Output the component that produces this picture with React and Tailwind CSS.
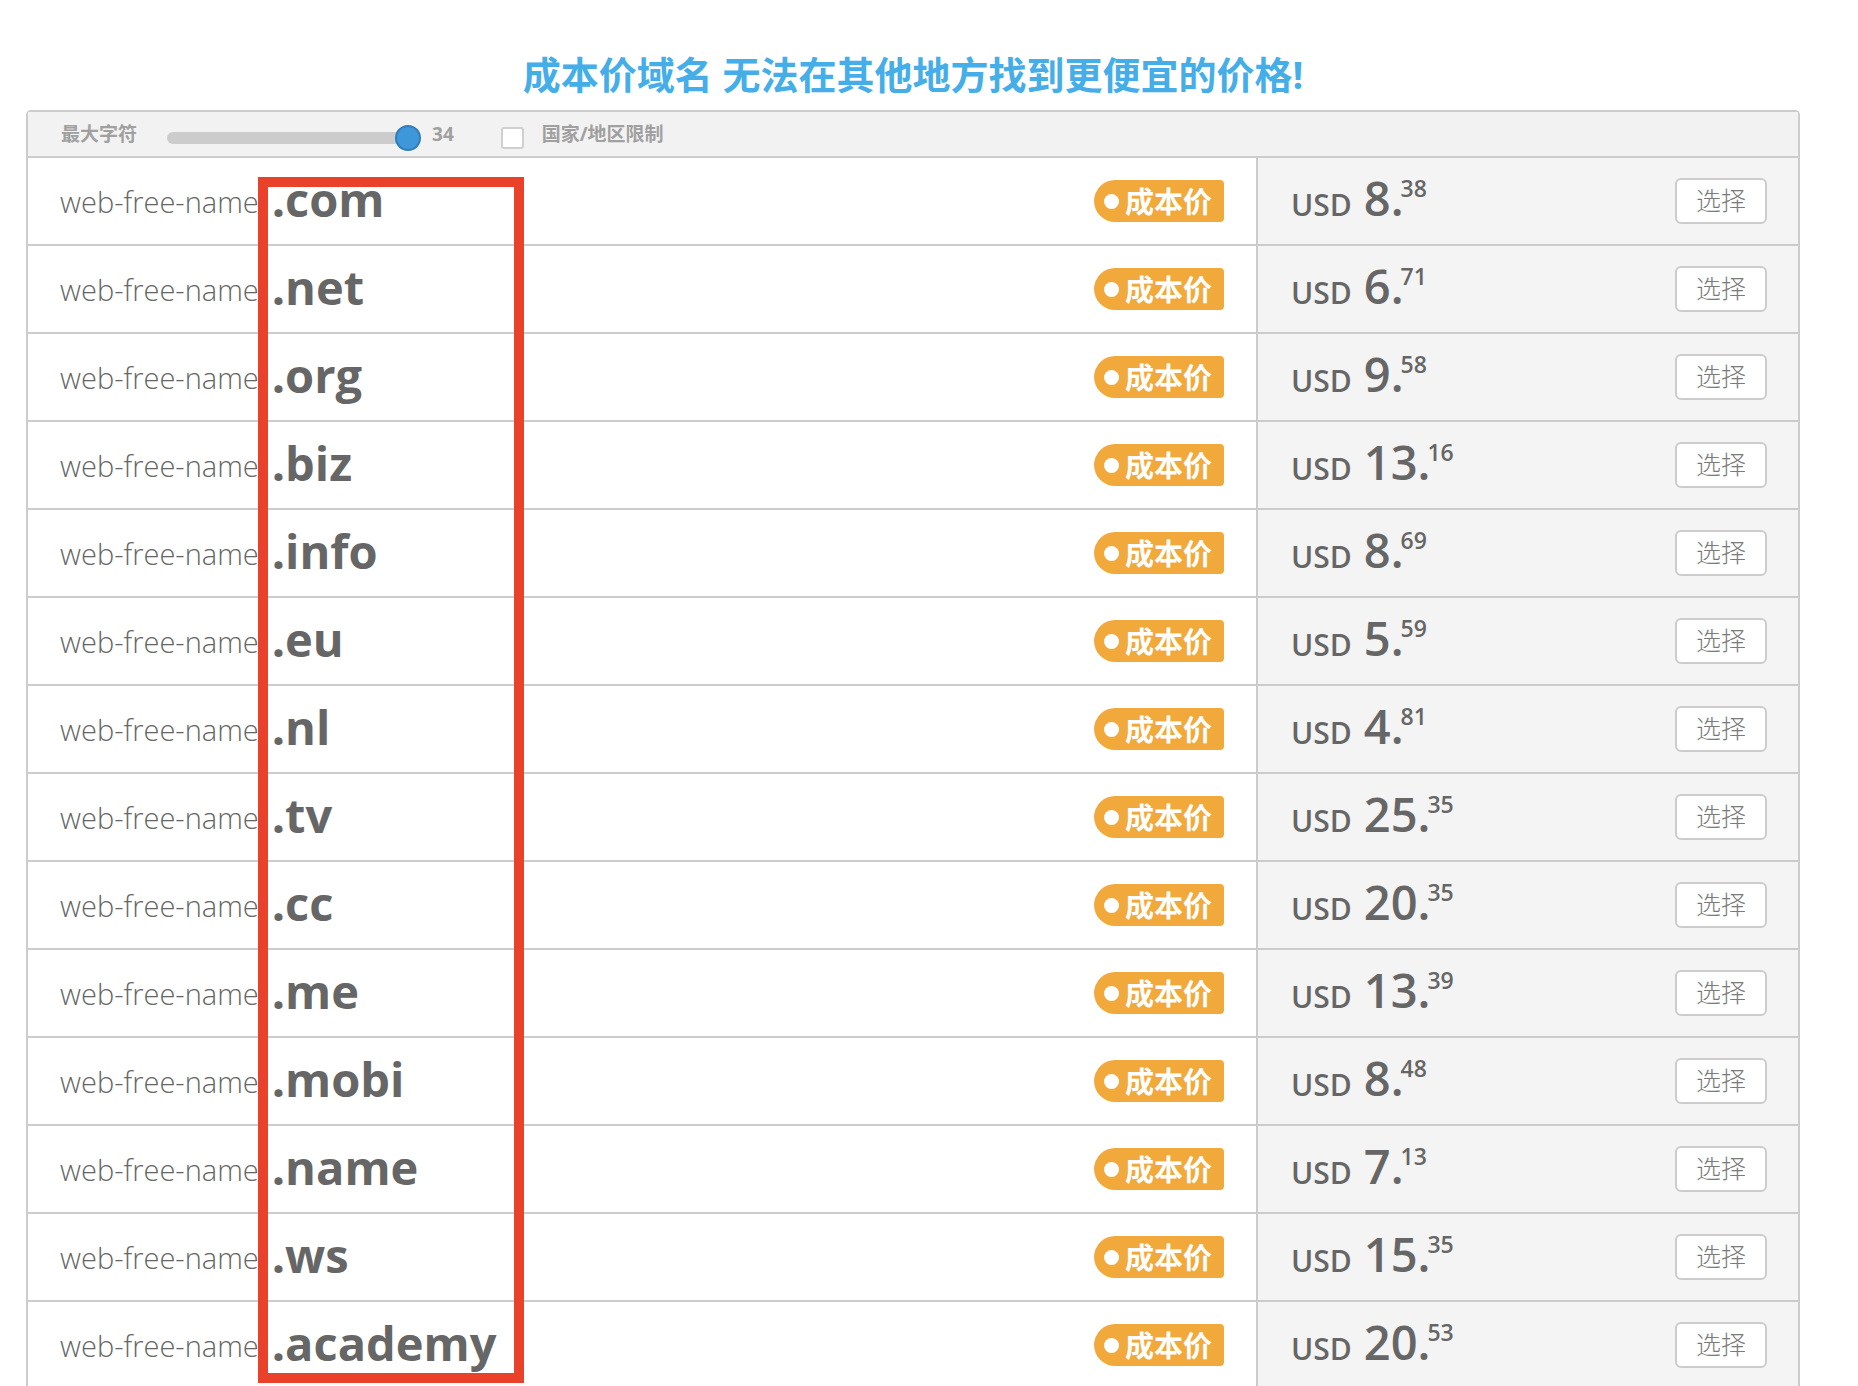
import React from 'react';

const DOMAINS = [
  { tld: '.com',     price: '8',  cents: '38' },
  { tld: '.net',     price: '6',  cents: '71' },
  { tld: '.org',     price: '9',  cents: '58' },
  { tld: '.biz',     price: '13', cents: '16' },
  { tld: '.info',    price: '8',  cents: '69' },
  { tld: '.eu',      price: '5',  cents: '59' },
  { tld: '.nl',      price: '4',  cents: '81' },
  { tld: '.tv',      price: '25', cents: '35' },
  { tld: '.cc',      price: '20', cents: '35' },
  { tld: '.me',      price: '13', cents: '39' },
  { tld: '.mobi',    price: '8',  cents: '48' },
  { tld: '.name',    price: '7',  cents: '13' },
  { tld: '.ws',      price: '15', cents: '35' },
  { tld: '.academy', price: '20', cents: '53' },
];

const CostBadge = () => (
  <div className="flex h-[42px] w-[130px] items-center rounded-l-[21px] rounded-r-[4px] bg-[#f2a93b] pl-[10px]">
    <span className="h-[15px] w-[15px] rounded-full bg-white"/>
    <span className="ml-[6px] text-[29px] font-bold leading-none text-white">成本价</span>
  </div>
);

const DomainRow = ({ tld, price, cents }) => (
  <div className="flex h-[88px] border-b-2 border-[#cccccc]">
    {/* name column */}
    <div className="flex flex-1 items-center bg-white pl-[32px] pr-[32px]">
      <div className="mb-[4px] whitespace-nowrap leading-none text-[#666666]">
        <span className="align-[4px] text-[29px] font-light">web-free-name</span>
        <span className="ml-[13px] text-[47px] font-bold">{tld}</span>
      </div>
      <div className="ml-auto">
        <CostBadge/>
      </div>
    </div>

    {/* price column */}
    <div className="flex w-[542px] items-center border-l-2 border-[#cccccc] bg-[#f4f4f4] pl-[33px] pr-[31px]">
      <div className="mb-[6px] whitespace-nowrap text-[#666666]">
        <span className="text-[30px] font-semibold">USD</span>
        <span className="ml-[12px] text-[47px] font-semibold">{price}.</span>
        <span className="ml-[-3px] align-[19px] text-[23px] font-semibold">{cents}</span>
      </div>
      <button className="ml-auto flex h-[46px] w-[92px] items-center justify-center rounded-[6px] border-2 border-[#cccccc] bg-white text-[25px] font-light text-[#7a7a7a]">
        选择
      </button>
    </div>
  </div>
);

export default function App() {
  return (
    <div className="relative h-[1386px] w-full overflow-hidden bg-white font-['Open_Sans','Noto_Sans_CJK_SC',sans-serif]">
      <div className="ml-[26px] w-[1774px]">
        <h1 className="pb-[12px] pt-[50px] text-center text-[38px] font-bold leading-[48px] text-[#45aee8]">
          成本价域名 无法在其他地方找到更便宜的价格!
        </h1>

        <div className="rounded-t-[5px] border-x-2 border-t-2 border-[#cccccc]">
          {/* filter bar */}
          <div className="flex h-[46px] items-center border-b-2 border-[#cccccc] bg-[#f2f2f2] pl-[33px] text-[19px] font-bold text-[#a0a0a0]">
            <span>最大字符</span>
            <div className="relative ml-[30px] mt-[8px] h-[12px] w-[241px] rounded-full bg-[#cccccc]">
              <span className="absolute left-[228px] top-[-7px] h-[26px] w-[26px] rounded-full border-2 border-[#2f7dbd] bg-[#3d97d8]"/>
            </div>
            <span className="ml-[24px]">34</span>
            <span className="ml-[47px] mt-[8px] h-[22px] w-[23px] rounded-[3px] border-2 border-[#d0d0d0] bg-white"/>
            <span className="ml-[18px]">国家/地区限制</span>
          </div>

          {DOMAINS.map(d => <DomainRow key={d.tld} {...d}/>)}
        </div>
      </div>

      {/* red annotation box */}
      <div className="pointer-events-none absolute left-[258px] top-[177px] h-[1206px] w-[266px] border-[10px] border-[#e9412a]"/>
    </div>
  );
}
